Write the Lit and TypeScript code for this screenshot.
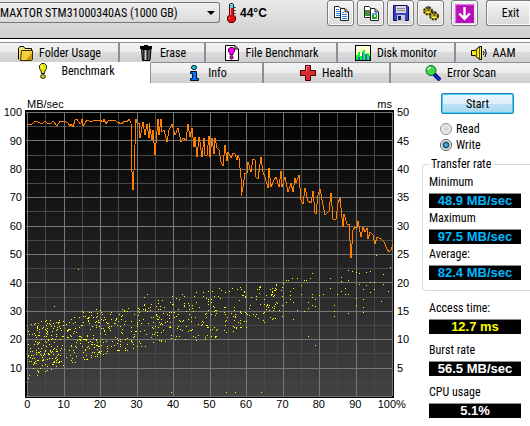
import { LitElement, html, css, svg } from "lit";
import { customElement, state } from "lit/decorators.js";

const ICONS: Record<string, unknown> = {
  folder: svg`<path d="M1.500 14.500V3.500L3 1.500H6.500L8 3.500H14.500V6" fill="#f7e36b" stroke="#000"/><path d="M3.500 15.500L4.500 5.500H15.500V14.500L14.500 15.500Z" fill="#f3cf3e" stroke="#3a2c00"/><path d="M9 15L15 8V15Z" fill="#c99410"/>`,
  trash: svg`<path d="M2 2.500H14" stroke="#000" stroke-width="3"/><path d="M6 .5H10" stroke="#000"/><path d="M3.500 4.500H13L12 15.500H4.500Z" fill="#6d6d6d" stroke="#000"/><path d="M5.500 5V15" stroke="#222"/><path d="M7.500 5V15" stroke="#ccc"/><path d="M9.500 5V15" stroke="#222"/><path d="M11 5V15" stroke="#444"/>`,
  filebench: svg`<path d="M1.500 .5H11L14.500 4V15.500H1.500Z" fill="#fff" stroke="#000"/><path d="M11 1V4H14" fill="none" stroke="#000"/><path d="M6 2.500H9L10.500 4V6.500L9 8.500V10H6V8.500L4.500 6.500V4Z" fill="#f0f" stroke="#402"/><circle cx="7.500" cy="12.500" r="1.600" fill="#f0f" stroke="#402"/>`,
  monitor: svg`<rect x=".5" y=".5" width="15" height="15" fill="#ffffcf" stroke="#000"/><path d="M1 10H3V7H5V11H7V9H8V5H10V11H12V8H14V10H15V15H1Z" fill="#0f2"/><path d="M3 12H5V15H3ZM7 7H8V15H7ZM10 9H12V15H10ZM14 11H15V15H14Z" fill="#3455f0"/>`,
  speaker: svg`<path d="M.5 5.500H4L8.500 1.500H10.500V14.500H8.500L4 10.500H.5Z" fill="#ffe51a" stroke="#000"/><path d="M5.500 4V12M8.500 2V14" stroke="#5b4c00"/><path d="M12.500 6Q13.500 8 12.500 10M14 4Q16.500 8 14 12" fill="none" stroke="#000"/>`,
  bang: svg`<path d="M6.500 .5H9.500L11.500 2.500V5.500L9.500 9V10.500H6.500V9L4.500 5.500V2.500Z" fill="#e6e600" stroke="#222"/><path d="M7 2V5" stroke="#fff"/><ellipse cx="8" cy="13.500" rx="2.400" ry="1.900" fill="#d8d800" stroke="#222"/>`,
  info: svg`<ellipse cx="8" cy="2.500" rx="2.600" ry="2" fill="#19c8f0" stroke="#012"/><path d="M4.500 6.500H10.500V13.500H12.500V15.500H4.500V13.500H6.500V8.500H4.500Z" fill="#0b72f5" stroke="#012"/>`,
  health: svg`<path d="M5.500 .5H10.500V5.500H15.500V10.500H10.500V15.500H5.500V10.500H.5V5.500H5.500Z" fill="#dd2c2c" stroke="#400"/><path d="M6.500 6V1.500H9.500" fill="none" stroke="#ff7b7b"/>`,
  scan: svg`<path d="M9 9L15 15" stroke="#000070" stroke-width="4"/><path d="M10 10L15 15" stroke="#1530d8" stroke-width="2"/><circle cx="6" cy="5.500" r="5" fill="#42d83e" stroke="#064"/><path d="M3 5Q3.500 2.500 6 2.500" fill="none" stroke="#d8ffd0" stroke-width="1.500"/>`,
  copy: svg`<path d="M1.500 1.500H6L8.500 4V12.500H1.500Z" fill="#fff" stroke="#222"/><path d="M3 4.500H6M3 6.500H7M3 8.500H7M3 10.500H7" stroke="#2a86e0"/><path d="M7.500 3.500H12L15.500 7V15.500H7.500Z" fill="#fff" stroke="#222"/><path d="M12 4V7H15" fill="none" stroke="#222"/><path d="M9 7.500H11M9 9.500H14M9 11.500H14M9 13.500H14" stroke="#2a86e0"/>`,
  copyimg: svg`<path d="M1.500 1.500H6L8.500 4V12.500H1.500Z" fill="#fff" stroke="#222"/><rect x="2" y="5" width="5" height="6" fill="#18a537"/><rect x="4" y="6" width="2" height="3" fill="#e33"/><path d="M7.500 3.500H12L15.500 7V15.500H7.500Z" fill="#fff" stroke="#222"/><path d="M12 4V7H15" fill="none" stroke="#222"/><rect x="9" y="8" width="5" height="6" fill="#18a537"/><rect x="9" y="8" width="5" height="2" fill="#48a8f0"/><rect x="11" y="10" width="2" height="2" fill="#ff3"/>`,
  save: svg`<path d="M.5 .5H14L15.500 2V15.500H.5Z" fill="#3840c8" stroke="#101050"/><rect x="3" y="1" width="10" height="7" fill="#d9d9df"/><path d="M4 3.500H12M4 5.500H12" stroke="#888"/><rect x="4" y="10" width="8" height="6" fill="#c8c8d0"/><rect x="5" y="11" width="3" height="4" fill="#181860"/>`,
  gears: svg`<ellipse cx="5" cy="6" rx="4" ry="3.500" fill="#c9ab00" stroke="#3d3200" stroke-width="2" stroke-dasharray="2 1"/><ellipse cx="11" cy="11" rx="4" ry="3.500" fill="#d8bb08" stroke="#3d3200" stroke-width="2" stroke-dasharray="2 1"/><path d="M5.500 1V6M11.500 6V11" stroke="#555" stroke-width="2"/><path d="M3 7.500H7M9 12.500H13" stroke="#fff28a"/>`,
  down: svg`<rect width="16" height="16" fill="#b80fb8"/><path d="M.5 15.500V.5H15.500" fill="none" stroke="#e477e4"/><path d="M8 2.500V12M3.500 8L8 12.500L12.500 8" fill="none" stroke="#fff" stroke-width="2"/>`,
};

const icon = (name: string) =>
  html`<svg class="icon" viewBox="0 0 16 16" aria-hidden="true">${ICONS[name]}</svg>`;

const TOOLS = [
  ["copy", "Copy text"],
  ["copyimg", "Copy screenshot"],
  ["save", "Save"],
  ["gears", "Options"],
  ["down", "Minimize"],
];

const BACK_TABS = [
  ["folder", "Folder Usage"],
  ["trash", "Erase"],
  ["filebench", "File Benchmark"],
  ["monitor", "Disk monitor"],
  ["speaker", "AAM"],
];

const FRONT_TABS = [
  ["bang", "Benchmark"],
  ["info", "Info"],
  ["health", "Health"],
  ["scan", "Error Scan"],
];

/* Plot area: the drive runs from 0 % at x=2 to 100 % at x=367; 100 MB/sec is y=2, zero is y=286. */
const W = 369;
const H = 288;
const px = (percent: number) => 2 + percent * 3.65;
const py = (value: number) => 286 - value * 2.84;

const TRANSFER =
  "2,14 6,15 10,11 13,12 17,14 20,11 23,14 26,13 28,11 32,16 35,11 37,12 39,11 43,13 45,16 46,14 48,17 50,10 52,9 55,14 56,13 57,9 58,16 62,10 66,12 70,10 75,10 78,12 79,9 81,14 83,11 90,10 92,12 97,14 99,11 102,12 104,9 106,13 107,62 108,80 109,61 111,9 112,13 114,13 115,28 118,12 120,25 122,14 124,28 124,13 127,30 128,20 130,45 133,9 134,25 136,9 137,22 139,20 142,32 144,20 147,14 150,25 153,18 156,32 158,28 161,30 163,14 165,27 167,18 169,37 170,27 172,47 174,27 175,32 177,47 179,28 180,45 182,45 184,26 185,47 187,28 189,44 190,28 192,38 194,40 196,52 198,56 200,35 202,51 203,42 206,48 208,43 210,44 212,50 213,45 214,48 216,68 216,86 218,77 220,63 222,63 223,52 226,62 228,49 230,50 231,67 233,69 236,47 238,62 240,67 243,78 244,58 246,77 248,72 251,67 254,77 256,61 257,77 260,67 263,82 266,73 268,82 270,68 271,73 274,65 276,90 278,94 280,78 283,91 286,93 288,81 290,103 291,104 293,85 295,79 298,95 300,105 304,101 306,83 308,109 311,109 313,93 315,88 318,117 319,104 322,114 324,114 326,148 328,120 330,117 332,118 333,111 336,127 338,117 340,122 342,118 343,129 345,122 348,125 350,134 352,127 356,129 359,132 362,139 364,142 366,140 368,134";

/* Access time samples: percent of drive, height on the left scale. */
const SAMPLES: [number, number][] = [
  [14, 44.8], [7.5, 31.6], [32, 35], [33, 36], [39.5, 1.5], [54.5, 1.4], [57, 1.4], [64, 1.4],
  [70, 39.7], [71, 41], [71.5, 41], [72.5, 41.7], [74, 41.5], [76, 41], [76.5, 41], [77.5, 41.5], [78, 43.3],
  [72, 37], [73, 38], [75, 36], [75, 39], [76, 30], [74, 30.2], [73, 27], [71, 33], [72, 34], [72, 35.5], [73, 33],
  [77, 33], [78, 32], [78, 36], [79, 34], [80, 35.5], [79, 31.8], [77, 31], [78, 35], [81, 35.8], [83, 38],
  [84, 30], [84, 28], [84, 32], [85, 35.8], [86, 37], [87, 36], [87, 38], [86, 40.5], [86, 42], [83, 41.5],
  [88, 29.4], [92, 31.3], [90, 34.5], [92, 37.7], [93, 39], [94, 36.5], [95, 37.7],
  [77, 21], [79, 18], [88, 44.5], [89, 44], [90, 43.7], [91, 43.3], [94, 44], [88, 36],
  [90, 32], [91, 39.5], [92, 34], [92, 29.6], [93, 43.7], [95, 40], [97, 33.5], [97.5, 39.5], [95.5, 49.8],
  [94, 40], [88, 41], [99.5, 45.5], [99, 37], [97.5, 43],
];

const LOWER = [6, 11, 14, 17, 19, 20, 24, 28];
const UPPER = [25, 29, 31, 32, 36, 38, 39, 41];
const DENSITY = [175, 130, 95, 90, 75, 75, 65];

function scatter(): string {
  let seed = 20117;
  const rnd = () => {
    seed = (seed * 1103515245 + 12345) % 2147483648;
    return (seed >>> 8) / 8388608;
  };
  const points = [...SAMPLES];
  DENSITY.forEach((count, band) => {
    for (let i = 0; i < count; i++) {
      const t = rnd();
      const low = LOWER[band] + (LOWER[band + 1] - LOWER[band]) * t;
      const high = UPPER[band] + (UPPER[band + 1] - UPPER[band]) * t;
      points.push([(band + t) * 10, low + (high - low) * rnd()]);
    }
  });
  return points
    .map(([p, v]) => `M${Math.round(px(p))} ${Math.round(py(v))}h1v1h-1z`)
    .join("");
}

const steps = Array.from({ length: 21 }, (_, i) => i);
const gridPath = (major: boolean) =>
  steps
    .filter((i) => (i % 2 === 0) === major)
    .map((i) => {
      const x = Math.round(px(i * 5));
      const y = Math.round(py(i * 5));
      return `M${x} 2h1V${H - 2}h-1zM1 ${y}H${W - 2}v1H1z`;
    })
    .join("");

@customElement("access-chart")
export class AccessChart extends LitElement {
  static styles = css`
    :host {
      display: grid;
      grid-template-columns: 25px 1fr 16px;
      grid-template-rows: 12px 288px 14px;
      font: 11px/12px "Liberation Sans", Arial, sans-serif;
      color: #000;
    }
    .scale {
      grid-row: 1 / 3;
      height: 284px;
      display: flex;
      flex-direction: column;
    }
    .left { grid-column: 1; text-align: right; padding-right: 3px; }
    .right { grid-column: 3; padding-left: 3px; }
    .tick { flex: 1; display: flex; align-items: center; }
    .left .tick { justify-content: flex-end; }
    .units {
      grid-column: 2;
      grid-row: 1;
      display: flex;
      justify-content: space-between;
      padding: 0 2px;
    }
    .plot { grid-column: 2; grid-row: 2; width: 100%; height: 100%; display: block; }
    .percents {
      grid-column: 1 / 4;
      grid-row: 3;
      display: flex;
      margin-left: 9px;
    }
    .percents span { flex: 1 1 0; min-width: 0; text-align: center; }
  `;

  render() {
    const tens = Array.from({ length: 10 }, (_, i) => 100 - i * 10);
    return html`
      <div class="scale left">${tens.map((n) => html`<span class="tick">${n}</span>`)}</div>
      <div class="units"><span>MB/sec</span><span>ms</span></div>
      <svg class="plot" viewBox="0 0 ${W} ${H}" preserveAspectRatio="none" role="img"
        aria-label="Transfer rate and access time" shape-rendering="crispEdges">
        <defs>
          <linearGradient id="bg" x1="0" y1="0" x2="0" y2="1">
            <stop offset="0" stop-color="#000" />
            <stop offset="1" stop-color="#424242" />
          </linearGradient>
        </defs>
        <rect width=${W} height=${H} fill="#000" />
        <rect x="2" y="2" width=${W - 3} height=${H - 4} fill="url(#bg)" />
        <path d=${gridPath(false)} fill="#484848" />
        <path d=${gridPath(true)} fill="#777" />
        <path d=${scatter()} fill="#ff0" />
        <polyline points=${TRANSFER} fill="none" stroke="#ff8000" stroke-width="1" />
      </svg>
      <div class="scale right">${tens.map((n) => html`<span class="tick">${n / 2}</span>`)}</div>
      <div class="percents">
        ${[...tens].reverse().map((n) => html`<span>${n - 10}</span>`)}<span>100%</span>
      </div>
    `;
  }
}

@customElement("app-root")
export class AppRoot extends LitElement {
  @state() private mode = "write";

  static styles = css`
    :host {
      display: block;
      min-height: 100vh;
      overflow: hidden;
      background: #fff;
      color: #000;
      font: 12px/16px "Roboto Condensed", Roboto, "Liberation Sans", sans-serif;
    }
    * { box-sizing: border-box; }
    button, select { font: inherit; color: inherit; }
    .icon { width: 16px; height: 16px; flex: none; display: block; }
    .toolbar {
      display: flex;
      align-items: flex-start;
      height: 39px;
      border-bottom: 1px solid #000;
      background: linear-gradient(#e9e9e9, #cfcfcf);
    }
    .drive { position: relative; margin-top: 2px; flex: 0 0 220px; }
    .drive select {
      appearance: none;
      display: block;
      width: 100%;
      height: 21px;
      padding: 0;
      border: 1px solid #777;
      border-left: 0;
      border-radius: 0 3px 3px 0;
      background: linear-gradient(#f0f0f0, #d9d9d9);
      outline: none;
    }
    .drive::after {
      content: "";
      position: absolute;
      right: 5px;
      top: 9px;
      border: 4px solid transparent;
      border-top-color: #000;
      border-bottom: 0;
      pointer-events: none;
    }
    .temp {
      display: flex;
      align-items: center;
      gap: 3px;
      margin: 2px auto 0 6px;
      font: bold 12px/22px "Liberation Sans", Arial, sans-serif;
    }
    .thermo { width: 11px; height: 20px; display: block; }
    .tools { display: flex; gap: 3px; }
    .tool, .exit {
      display: flex;
      align-items: center;
      justify-content: center;
      width: 27px;
      height: 26px;
      padding: 0;
      border: 1px solid #7d7d7d;
      border-radius: 3px;
      background: linear-gradient(#f4f4f4, #dadada);
      box-shadow: inset 0 0 0 1px #fafafa;
    }
    .tool:last-child { margin-left: 4px; }
    .tool:last-child .icon { width: 19px; height: 19px; }
    .exit {
      width: 44px;
      margin-left: 8px;
      padding-left: 4px;
      border-right: 0;
      border-radius: 3px 0 0 3px;
    }
    .tabs { display: grid; }
    .back { grid-template-columns: 120fr 86fr 132fr 118fr 74fr; padding-top: 3px; }
    .front { grid-template-columns: 151fr 113fr 127fr 139fr; }
    .tab {
      display: flex;
      align-items: center;
      justify-content: center;
      gap: 6px;
      height: 20px;
      min-width: 0;
      padding: 0;
      border: 0;
      border-top: 1px solid #8c8e99;
      border-right: 2px solid #8c8e99;
      background: linear-gradient(#f2f2f2, #ebebeb 50%, #dcdcdc 50%, #cfcfcf);
      white-space: nowrap;
    }
    .tab:last-child { border-right: 0; }
    .front .tab { height: 21px; }
    .front .tab.current {
      background: #fff;
      border-top-color: #fff;
      border-right-width: 1px;
      padding-bottom: 4px;
      gap: 10px;
    }
    .page { display: flex; padding-top: 10px; }
    .chart { flex: 1; min-width: 0; margin-top: 5px; }
    .side {
      flex: 0 0 108px;
      margin-left: 12px;
      display: flex;
      flex-direction: column;
    }
    .start {
      width: 73px;
      height: 21px;
      margin-left: 19px;
      padding: 0;
      border: 1px solid #2c80a8;
      border-radius: 2px;
      background: linear-gradient(#eaf6fd, #dceffa 50%, #bee2f6 50%, #a9d9f2);
      box-shadow: inset 0 0 0 1px #3fd0fb;
    }
    .modes { border: 0; margin: 7px 0 0 18px; padding: 0; }
    .mode { display: flex; align-items: center; gap: 4px; height: 16px; }
    .mode input {
      appearance: none;
      width: 12px;
      height: 12px;
      margin: 0;
      border: 1px solid #8a8f94;
      border-radius: 50%;
      background: radial-gradient(#d0d0d0, #fafafa);
    }
    .mode input:checked {
      background: radial-gradient(circle, #6cc6ee 0, #15506f 3px, #f4f4f4 4px);
      border-color: #50565c;
    }
    .rates {
      min-width: 0;
      margin: 3px 0 0;
      padding: 2px 0 10px 6px;
      border: 1px solid #d0dbe3;
      border-right: 0;
      border-radius: 4px 0 0 4px;
    }
    .rates legend { padding: 0 2px; }
    .stat { display: flex; flex-direction: column; gap: 3px; }
    .stat + .stat { margin-top: 2px; }
    .others { padding: 9px 0 6px 7px; }
    .others .stat + .stat { margin-top: 8px; }
    .value {
      width: 92px;
      height: 15px;
      border-top: 1px solid #8a8a8a;
      background: #000;
      color: #00b8ff;
      text-align: center;
      font: bold 13px/14px "Liberation Sans", Arial, sans-serif;
    }
    .yellow { color: #ff0; }
    .white { color: #fff; }
  `;

  private tab([name, label]: string[], current = false) {
    return html`<button class="tab ${current ? "current" : ""}" role="tab" aria-selected=${current}>
      ${icon(name)}<span>${label}</span>
    </button>`;
  }

  private stat(label: string, value: string, tone = "") {
    return html`<label class="stat"><span>${label}</span><output class="value ${tone}">${value}</output></label>`;
  }

  private modeOption(value: string, label: string) {
    return html`<label class="mode">
      <input type="radio" name="mode" .checked=${this.mode === value} @change=${() => (this.mode = value)} />
      ${label}
    </label>`;
  }

  render() {
    return html`
      <header class="toolbar">
        <div class="drive">
          <select aria-label="Drive"><option>MAXTOR STM31000340AS (1000 GB)</option></select>
        </div>
        <div class="temp">
          <svg class="thermo" viewBox="0 0 11 20" aria-hidden="true">
            <path d="M3.500 1.500L4.500 .5H6.500L7.500 1.500V12L9.500 14V17L7.500 19.500H3.500L1.500 17V14L3.500 12Z" fill="#e80c0c" stroke="#400" />
            <rect x="4" y="1" width="3" height="4" fill="#3fe0f0" />
            <path d="M4.500 5V12M3.500 14.500V16" stroke="#ff9a9a" />
            <path d="M8 4.500H10M8 7.500H10M8 10.500H10" stroke="#555" />
          </svg>
          <span>44°C</span>
        </div>
        <div class="tools">
          ${TOOLS.map(([name, label]) => html`<button class="tool" aria-label=${label}>${icon(name)}</button>`)}
        </div>
        <button class="exit">Exit</button>
      </header>
      <nav role="tablist">
        <div class="tabs back">${BACK_TABS.map((t) => this.tab(t))}</div>
        <div class="tabs front">${FRONT_TABS.map((t, i) => this.tab(t, i === 0))}</div>
      </nav>
      <main class="page">
        <access-chart class="chart"></access-chart>
        <aside class="side">
          <button class="start">Start</button>
          <fieldset class="modes" aria-label="Mode">
            ${this.modeOption("read", "Read")} ${this.modeOption("write", "Write")}
          </fieldset>
          <fieldset class="rates">
            <legend>Transfer rate</legend>
            ${this.stat("Minimum", "48.9 MB/sec")}
            ${this.stat("Maximum", "97.5 MB/sec")}
            ${this.stat("Average:", "82.4 MB/sec")}
          </fieldset>
          <div class="others">
            ${this.stat("Access time:", "12.7 ms", "yellow")}
            ${this.stat("Burst rate", "56.5 MB/sec", "white")}
            ${this.stat("CPU usage", "5.1%", "white")}
          </div>
        </aside>
      </main>
    `;
  }
}
